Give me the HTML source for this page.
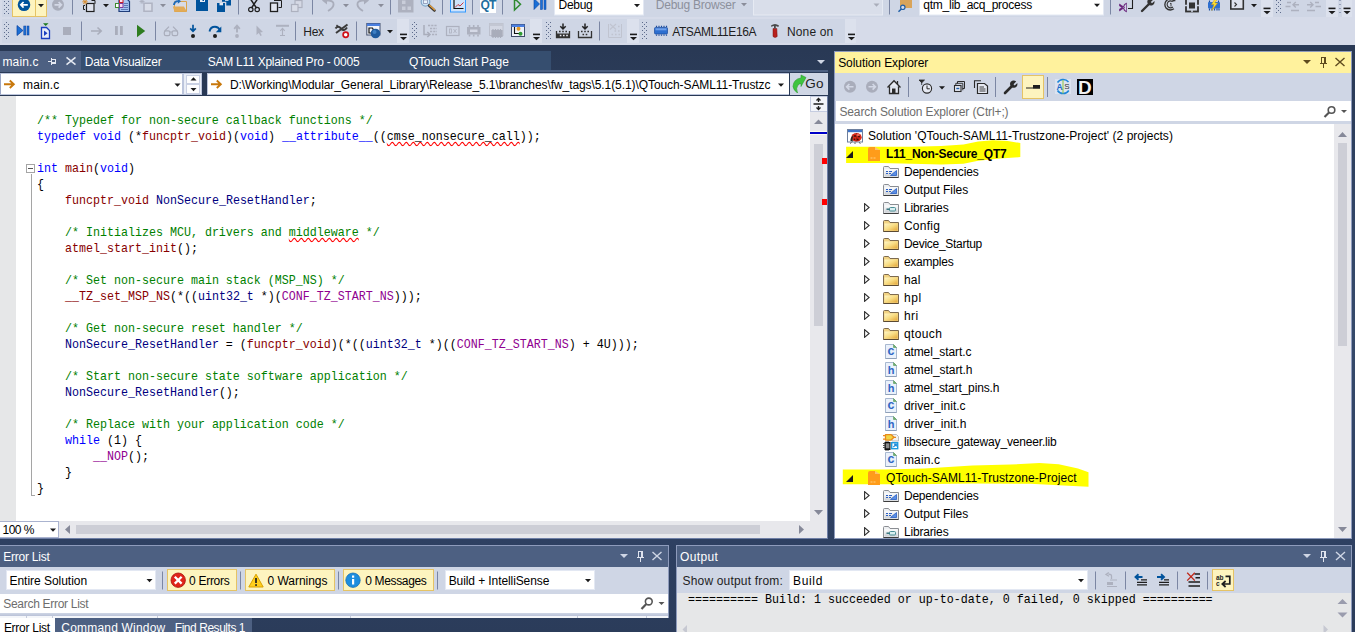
<!DOCTYPE html>
<html>
<head>
<meta charset="utf-8">
<title>Atmel Studio</title>
<style>
*{box-sizing:border-box;margin:0;padding:0}
html,body{width:1355px;height:632px;overflow:hidden;background:#293955}
body{background:linear-gradient(to bottom,#293955 0,#293955 50px,#314465 205px,#35496a 325px,#2e4062 540px,#2b3c5a 632px)}
body{font-family:"Liberation Sans",sans-serif;font-size:12px;color:#000;position:relative}
.abs{position:absolute}
.t{position:absolute;white-space:pre;line-height:16px;font-size:12px}
svg{position:absolute;overflow:visible}
/* ---------- top toolbars ---------- */
#shelf{left:0;top:0;width:1355px;height:45px;background:#d6dbe9}
.tb{background:#cfd6e5}
.grip{position:absolute;width:5px;background-image:radial-gradient(circle at 0.5px 0.5px,#6a7590 0.6px,transparent 0.7px),radial-gradient(circle at 0.5px 0.5px,#6a7590 0.6px,transparent 0.7px);background-size:4px 4px,4px 4px;background-position:0 0,2px 2px}
.sep{position:absolute;width:1px;background:#8591ad}
.combo{position:absolute;background:#fff;border:1px solid #e5ebf5}
.arr{position:absolute;width:0;height:0;border-left:3.5px solid transparent;border-right:3.5px solid transparent;border-top:4px solid #1b1b1c}
/* ---------- tabs ---------- */
.tab{position:absolute;top:53px;height:19px;color:#fff;font-size:12px;line-height:19px;white-space:pre}
/* ---------- code ---------- */
#code{left:0;top:96px;width:810px;height:425px;background:#fff;overflow:hidden}
.ln{position:absolute;left:37px;height:16px;line-height:16px;font-family:"Liberation Mono",monospace;font-size:11.67px;white-space:pre;color:#000;transform:scaleY(1.1);transform-origin:0 12px;margin-top:2px}
.c{color:#008000}.k{color:#0000ff}.f{color:#880000}.v{color:#000080}.m{color:#900090}
.sq{text-decoration:underline wavy #ff0000 0.7px;text-decoration-skip-ink:none;text-underline-offset:0.6px}
/* ---------- solution explorer ---------- */
.row{position:absolute;left:0;height:18px;line-height:20px;font-size:12px;white-space:pre}
</style>
</head>
<body>

<svg width="0" height="0" style="position:absolute">
<defs>
<linearGradient id="gFold" x1="0" y1="0" x2="1" y2="1"><stop offset="0" stop-color="#fff7c8"/><stop offset="0.5" stop-color="#f8dc82"/><stop offset="1" stop-color="#e2a63a"/></linearGradient>
<linearGradient id="gGray" x1="0" y1="0" x2="0" y2="1"><stop offset="0" stop-color="#ffffff"/><stop offset="1" stop-color="#c9cdd2"/></linearGradient>
<symbol id="iFolder" viewBox="0 0 16 12"><path d="M0.5 11.5V1.5Q0.5 0.5 1.5 0.5H5.5L7 2.5H15.5V11.5Z" fill="#f2d383" stroke="#7d6a4f"/><rect x="1.5" y="3.5" width="13" height="7" fill="url(#gFold)"/><path d="M0.5 11.5H15.5" stroke="#5b4a33"/></symbol>
<symbol id="iGFolder" viewBox="0 0 16 12"><path d="M0.5 11.5V1.5Q0.5 0.5 1.5 0.5H5.5L7 2.5H15.5V11.5Z" fill="#eef0f2" stroke="#8a8d92"/><rect x="1.5" y="3.5" width="13" height="7" fill="url(#gGray)"/><path d="M0.5 11.5H15.5" stroke="#3c3c3c"/></symbol>
<symbol id="iDep" viewBox="0 0 16 12"><path d="M0.5 11.5V1.5Q0.5 0.5 1.5 0.5H5.5L7 2.5H15.5V11.5Z" fill="#eef0f2" stroke="#8a8d92"/><rect x="1.5" y="3.5" width="13" height="7" fill="url(#gGray)"/><path d="M0.5 11.5H15.5" stroke="#3c3c3c"/><path d="M3 5.5h2M6 5.5h3M3 7.5h2M6 7.5h2" stroke="#2a5fc4" stroke-width="1"/><path d="M13.5 4.5V9.5H7.5Z" fill="#5b8fe6" stroke="#2a5fc4" stroke-width="0.8"/></symbol>
<symbol id="iLib" viewBox="0 0 16 12"><path d="M0.5 11.5V1.5Q0.5 0.5 1.5 0.5H5.5L7 2.5H15.5V11.5Z" fill="#eef0f2" stroke="#8a8d92"/><rect x="1.5" y="3.5" width="13" height="7" fill="url(#gGray)"/><path d="M0.5 11.5H15.5" stroke="#3c3c3c"/><rect x="6.5" y="5.5" width="6" height="3.5" rx="1" fill="#d8eef0" stroke="#4a8f96"/><path d="M3.5 7.2h3" stroke="#2e6f78" stroke-width="1.4"/></symbol>
<symbol id="iFileC" viewBox="0 0 12 15"><path d="M0.5 0.5H8.5L11.5 3.5V14.5H0.5Z" fill="#eaf1fb" stroke="#a8b8d0"/><path d="M8.5 0.5V3.5H11.5Z" fill="#6fae6f" stroke="#5c9c5c" stroke-width="0.6"/><path d="M0.5 14.5H11.5" stroke="#8fa0b8"/></symbol>
<symbol id="iProj" viewBox="0 0 12 14"><path d="M0 2Q0 0 2 0H7V3H12V14H0Z" fill="#ff9c1a"/><path d="M7 0L12 3H7Z" fill="#ffc36b"/><path d="M2.5 11h2M5.5 11h2" stroke="#ffbf5f" stroke-width="1.3"/></symbol>
<symbol id="iExp" viewBox="0 0 6 9"><path d="M0.6 0.7L5.1 4.5L0.6 8.3Z" fill="#fff" stroke="#2d2d2d" stroke-width="1.1"/></symbol>
<symbol id="iCol" viewBox="0 0 7 7"><path d="M7 0V7H0Z" fill="#1b1b1b"/></symbol>
</defs>
</svg>

<!-- ================= TOP TOOLBARS ================= -->
<div id="shelf" class="abs"></div>
<div id="tb1" class="abs tb" style="left:2px;top:0;width:1265px;height:17px"></div>
<div id="tb2" class="abs tb" style="left:2px;top:19px;width:853px;height:24px"></div>

<!-- toolbar icons -->
<svg id="tbsvg" style="left:0;top:0" width="1355" height="45" viewBox="0 0 1355 45">
<defs>
<pattern id="grip" width="4" height="4" patternUnits="userSpaceOnUse"><rect x="0" y="0" width="1" height="1" fill="#5d6b8c"/><rect x="2" y="2" width="1" height="1" fill="#5d6b8c"/></pattern>
<g id="ovf"><rect x="0" y="0" width="7" height="1.6" fill="#1b1b1c"/><path d="M0 3.4H7L3.5 6.6Z" fill="#1b1b1c"/></g>
<g id="dd"><path d="M0 0H6L3 3.2Z"/></g>
</defs>
<!-- ===== ROW 1 ===== -->
<rect x="1261" y="0" width="91" height="17" fill="#dce1ed"/>
<rect x="1273" y="0" width="53" height="17" fill="#cfd6e5"/>
<rect x="1338" y="0" width="4" height="17" fill="#cfd6e5"/>
<rect x="4" y="0" width="6" height="14" fill="url(#grip)" transform="translate(0,1)"/>
<!-- back button -->
<rect x="12.5" y="-1" width="34" height="17.5" fill="#fdf4bf" stroke="#e5c365"/>
<path d="M35.5 0V16" stroke="#e5c365"/>
<circle cx="24" cy="4.8" r="6.3" fill="#00539c"/>
<path d="M27.8 4.8H21M23.6 2L20.8 4.8L23.6 7.6" stroke="#fff" stroke-width="1.7" fill="none"/>
<use href="#dd" x="38" y="4" fill="#1b1b1c"/>
<circle cx="58" cy="4.8" r="6" fill="#a9adbb"/>
<path d="M54.5 4.8H61M58.6 2L61.4 4.8L58.6 7.6" stroke="#d3d8e6" stroke-width="1.7" fill="none"/>
<path d="M72.5 0V14.5" stroke="#7b86a3"/>
<!-- new project -->
<rect x="86.5" y="3.5" width="7.5" height="8" fill="#dfe3ee" stroke="#1e1e1e" stroke-width="1.2"/>
<path d="M85 5.5H83.5V9.5H85" fill="none" stroke="#1e1e1e"/>
<path d="M91.5 0.5H95V3.8" fill="none" stroke="#1e1e1e"/>
<path d="M85 -1V4.5M82.3 1.8H87.7M83 -0.2L87 3.8M87 -0.2L83 3.8" stroke="#d88a2a" stroke-width="0.9"/>
<use href="#dd" x="103" y="4" fill="#1b1b1c"/>
<!-- new file w/ squares -->
<path d="M119 -1H127L129.5 1.5V11.5H119Z" fill="#a8c4f0" stroke="#1f3d7a" stroke-width="1.2"/>
<path d="M124 3.5H128M124 5.5H128M124 7.5H128M121 9.5H128" stroke="#4a68a8" stroke-width="0.8"/>
<rect x="119.5" y="-1.5" width="3.5" height="4" fill="#ffe3ee" stroke="#c8242b"/>
<rect x="115.5" y="3.5" width="3.5" height="4" fill="#fff" stroke="#3c8a2e"/>
<rect x="119.5" y="3.5" width="3.5" height="4" fill="#fde" stroke="#7a3a9a"/>
<!-- gray new item -->
<path d="M144 3.2H152V11.2H144Z" fill="#d9dde8" stroke="#b0b4c3" stroke-width="1.6"/>
<path d="M142 -1V4M139.5 1.5H144.5M140.3 -0.3L143.7 3.3M143.7 -0.3L140.3 3.3" stroke="#adb1bf" stroke-width="0.9"/>
<use href="#dd" x="160" y="4" fill="#8a8d9a"/>
<!-- open folder -->
<path d="M174.5 1.5H186.5V11.5H174.5Z" fill="#d8dbe6" stroke="#dba44c"/>
<path d="M172.8 6.5H184L186.8 11.5H174.5Z" fill="#e3ab57"/>
<path d="M173 5Q173.5 0.5 178 0.3L177.5 -1.5L181 1.2L177.8 3.8L177.9 2Q175.3 2.2 174.8 5Z" fill="#1d6ab8"/>
<!-- save -->
<path d="M196 -1H208V11H196Z" fill="#00539c"/>
<rect x="200" y="-1" width="5" height="3" fill="#e6ebf5"/><rect x="202.5" y="-1" width="1.5" height="2" fill="#00539c"/>
<!-- save all -->
<path d="M217 3H225V12H217Z" fill="#00539c"/><rect x="219.5" y="3" width="3.5" height="2.3" fill="#e6ebf5"/>
<path d="M222 -1H231V5.5H226.3V1.8H222Z" fill="#00539c"/><rect x="225" y="-1" width="3.5" height="1.8" fill="#e6ebf5"/>
<path d="M238.5 0V14.5" stroke="#7b86a3"/>
<!-- scissors -->
<path d="M250.5 -1L256.5 8M257.5 -1L251.5 8" stroke="#1e1e1e" stroke-width="1.5" fill="none"/>
<circle cx="250.8" cy="9.5" r="2.2" fill="none" stroke="#1e1e1e" stroke-width="1.2"/><circle cx="257.2" cy="9.5" r="2.2" fill="none" stroke="#1e1e1e" stroke-width="1.2"/>
<!-- copy -->
<path d="M274 0.5H281.5V7.5H278.5" fill="none" stroke="#1e1e1e"/>
<rect x="270.5" y="3" width="7" height="8.5" fill="#e1e4ee" stroke="#1e1e1e" stroke-width="1.3"/>
<!-- paste gray -->
<rect x="295" y="0.5" width="7" height="7" fill="#d5d9e5" stroke="#adb1bf" stroke-width="1.2"/>
<rect x="291.5" y="4.5" width="6.5" height="7" fill="#d9dde8" stroke="#adb1bf" stroke-width="1.2"/>
<path d="M312.5 0V14.5" stroke="#7b86a3"/>
<!-- undo gray -->
<path d="M324 0.5H329Q334 1 333.5 5Q333 8 328 11" fill="none" stroke="#a9adbb" stroke-width="1.8"/>
<path d="M322 0.5L327 -3.5V4.5Z" fill="#a9adbb"/>
<use href="#dd" x="343" y="4" fill="#8a8d9a"/>
<!-- redo gray -->
<path d="M367 0.5H362Q357 1 357.5 5Q358 8 363 11" fill="none" stroke="#a9adbb" stroke-width="1.8"/>
<path d="M369 0.5L364 -3.5V4.5Z" fill="#a9adbb"/>
<use href="#dd" x="378" y="4" fill="#8a8d9a"/>
<path d="M390.5 0V14.5" stroke="#7b86a3"/>
<!-- gray grid -->
<rect x="398" y="-1" width="15.5" height="13.5" fill="#adb1bf"/>
<rect x="402" y="0.5" width="3.5" height="3.5" fill="#c9cdd9"/><rect x="402" y="6.5" width="3.5" height="3.5" fill="#c9cdd9"/><rect x="407.5" y="6.5" width="3.5" height="3.5" fill="#c9cdd9"/>
<!-- magnifier -->
<circle cx="425.5" cy="1.8" r="4.3" fill="#cfe6f7" stroke="#7fa6c8" stroke-width="1.2"/>
<rect x="423.5" y="0" width="4" height="3.5" fill="#e9f3fb" stroke="#8a93b5" stroke-width="0.8"/>
<path d="M429 5.5L434.5 10.5" stroke="#3d3a36" stroke-width="2.6" stroke-linecap="round"/>
<path d="M429.5 5.3L434.5 9.8" stroke="#e9a03a" stroke-width="1.2" stroke-linecap="round"/>
<path d="M442.5 0V14.5" stroke="#7b86a3"/>
<!-- chart (checked) -->
<rect x="450.5" y="-1" width="15" height="13" fill="#cfe3fb" stroke="#3399ff"/>
<path d="M454 -1V8.5H463.5" fill="none" stroke="#111" stroke-width="1.2"/>
<path d="M455 7.5L458 4.5L460 6L463.5 2.5" fill="none" stroke="#c8242b" stroke-width="0.9"/>
<path d="M472.5 0V14.5" stroke="#7b86a3"/>
<!-- QT -->
<rect x="480" y="-1" width="16" height="14" fill="#fff"/>
<path d="M502.5 0V14.5" stroke="#7b86a3"/>
<!-- green play outline -->
<path d="M514.5 -1.5L520.5 4.3L514.5 10Z" fill="none" stroke="#2f8a2f" stroke-width="1.5"/>
<!-- blue play-pause -->
<path d="M534 -1.5L539.5 4L534 9.5Z" fill="#1a6fd6" stroke="#0a3f9c" stroke-width="0.6"/>
<rect x="540.5" y="-1" width="2" height="10.5" fill="#1a6fd6" stroke="#0a3f9c" stroke-width="0.5"/><rect x="544" y="-1" width="2" height="10.5" fill="#1a6fd6" stroke="#0a3f9c" stroke-width="0.5"/>
<!-- Debug combo -->
<rect x="554.5" y="-1" width="89" height="16" fill="#fff" stroke="#e3e8f3"/>
<use href="#dd" x="634" y="4" fill="#1b1b1c"/>
<use href="#dd" x="741" y="3" fill="#8a8d9a"/>
<rect x="753.5" y="-1" width="129" height="16" fill="#d9deea" stroke="#e6eaf3"/>
<use href="#dd" x="873.5" y="3.5" fill="#a9adba"/>
<path d="M889.5 0V14.5" stroke="#7b86a3"/>
<!-- find in files -->
<rect x="900" y="-1" width="12" height="9" fill="#d9a45a"/>
<circle cx="902.8" cy="7.3" r="2.2" fill="#d6dbe9" stroke="#1f5fa8" stroke-width="1.2"/>
<path d="M901.3 9L898.5 11.8" stroke="#1f5fa8" stroke-width="1.5"/>
<rect x="919.5" y="-1" width="184" height="16" fill="#fff" stroke="#e3e8f3"/>
<use href="#dd" x="1094" y="3.8" fill="#1b1b1c"/>
<path d="M1110.5 0V14.5" stroke="#7b86a3"/>
<!-- VS icon -->
<path d="M1121.5 -1H1132.5V8.5H1128" fill="none" stroke="#1e1e1e" stroke-width="1.1"/>
<path d="M1119.5 4L1124.5 7.5L1119.5 11V9L1122 7.5L1119.5 6Z M1126.5 3V12L1124 10.3V4.7Z M1126.3 3.3L1122.5 7.5L1126.3 11.7" fill="#68217a" stroke="#68217a" stroke-width="0.6"/>
<!-- wrench -->
<path d="M1142 11L1149 4" stroke="#333" stroke-width="2.4" stroke-linecap="round"/>
<path d="M1148 -0.5Q1151 -2.5 1153.5 -0.5L1150.8 2L1152 3.3L1154.5 1Q1155 4 1152.5 5.2Q1150 6 1148.2 4.5Q1146.5 2 1148 -0.5Z" fill="#333"/>
<!-- circular -->
<path d="M1174 0Q1170 -2.5 1166.5 0.5Q1163.5 4 1166 8Q1169.5 11.5 1174 8.8" fill="none" stroke="#333" stroke-width="1.3"/>
<path d="M1172.5 1.5Q1170 0 1168 2Q1166.3 4.5 1168 6.8Q1170.5 8.8 1173 7" fill="none" stroke="#333" stroke-width="1.1"/>
<path d="M1171 3V6.5M1170 3.8L1171 3" stroke="#333" stroke-width="0.9" fill="none"/>
<path d="M1172.8 -1.5L1176 1L1172 1.8Z" fill="#333"/>
<!-- square icon -->
<rect x="1186" y="-1" width="12" height="12.5" fill="none" stroke="#333" stroke-width="1.8"/>
<rect x="1189" y="2.5" width="6" height="6" fill="#333"/>
<path d="M1192 -1V1.5M1192 9.5V12M1185 5.5H1187.5M1196.5 5.5H1199" stroke="#cfd6e5" stroke-width="1.5"/>
<!-- chip w lightning -->
<rect x="1208" y="2" width="12" height="6.5" rx="1" fill="#2d6fd0"/>
<path d="M1209.5 8.5v2M1212 8.5v2M1214.5 8.5v2M1217 8.5v2M1219 8.5v2M1209.5 2V0.5M1218.5 2V0.5" stroke="#1d4fa0" stroke-width="1.2"/>
<path d="M1215.5 -2L1211.5 4.5H1214L1211.8 10.5L1217.5 3H1214.8L1218 -2Z" fill="#ffe033" stroke="#c79a10" stroke-width="0.5"/>
<!-- window icon -->
<rect x="1230.8" y="-1" width="12.5" height="10" fill="#dfe2ec" stroke="#333" stroke-width="1.6"/>
<path d="M1234.5 2.5L1236.5 4.5L1234.5 6.5" fill="none" stroke="#333" stroke-width="1.1"/>
<use href="#dd" x="1251" y="4" fill="#1b1b1c"/>
<use href="#ovf" x="1263.5" y="7.6"/>
<rect x="1275" y="-2" width="6" height="16" fill="url(#grip)"/>
<!-- outdent / indent gray -->
<path d="M1287 2.5H1291M1285.5 6.5H1290.5M1291 10.5H1299" stroke="#adb1bf" stroke-width="1.4"/>
<path d="M1299 4.7H1293M1295.8 2L1293 4.7L1295.8 7.4" stroke="#adb1bf" stroke-width="1.4" fill="none"/>
<path d="M1315 2.5H1319M1315.5 6.5H1321M1307 10.5H1315" stroke="#adb1bf" stroke-width="1.4"/>
<path d="M1307 4.7H1313M1310.2 2L1313 4.7L1310.2 7.4" stroke="#adb1bf" stroke-width="1.4" fill="none"/>
<use href="#ovf" x="1328.5" y="7.6"/>
<rect x="1339.5" y="0" width="1" height="1" fill="#5d6b8c"/><rect x="1339.5" y="4" width="1" height="1" fill="#5d6b8c"/><rect x="1339.5" y="8" width="1" height="1" fill="#5d6b8c"/><rect x="1339.5" y="12" width="1" height="1" fill="#5d6b8c"/>
<use href="#ovf" x="1343.5" y="7.6"/>

<!-- ===== ROW 2 ===== -->
<rect x="397" y="19" width="12" height="24" fill="#dce1ed"/>
<rect x="530" y="19" width="12" height="24" fill="#dce1ed"/>
<rect x="627" y="19" width="12" height="24" fill="#dce1ed"/>
<rect x="845" y="19" width="11" height="24" fill="#dce1ed"/>
<rect x="4" y="22" width="6" height="18" fill="url(#grip)"/>
<!-- start debugging -->
<path d="M17 25.5L23 30.5L17 35.5Z" fill="#1a6fd6" stroke="#0a3f9c" stroke-width="0.7"/>
<rect x="23.8" y="26" width="2" height="9" fill="#1a6fd6" stroke="#0a3f9c" stroke-width="0.5"/><rect x="27" y="26" width="2" height="9" fill="#1a6fd6" stroke="#0a3f9c" stroke-width="0.5"/>
<!-- doc with play -->
<path d="M41.5 27.5H46.5L49.5 30.5V38.5H41.5Z" fill="#e8ecf8" stroke="#1c3fc0" stroke-width="1.3"/>
<path d="M44 30.5L47.5 33.3L44 36Z" fill="#1c3fc0"/>
<path d="M43 23.2H48.5L45.7 26Z" fill="#1e7a1e"/>
<!-- stop gray -->
<rect x="63" y="27" width="8" height="8" fill="#a9adbb"/>
<path d="M81.5 21.5V40.5" stroke="#7b86a3"/>
<!-- gray arrow -->
<path d="M91 31H101M97.5 27.5L101.2 31L97.5 34.5" stroke="#a9adbb" stroke-width="1.6" fill="none"/>
<!-- pause gray -->
<rect x="115" y="26" width="2.8" height="9" fill="#a9adbb"/><rect x="120" y="26" width="2.8" height="9" fill="#a9adbb"/>
<!-- play green -->
<path d="M137 24.8L145.2 31L137 37.2Z" fill="#2e7d20"/>
<path d="M155.5 21.5V40.5" stroke="#7b86a3"/>
<!-- glasses gray -->
<rect x="164.3" y="30.8" width="5.6" height="4.8" rx="1.6" fill="none" stroke="#a9adbb" stroke-width="1.2"/><rect x="172.1" y="30.8" width="5.6" height="4.8" rx="1.6" fill="none" stroke="#a9adbb" stroke-width="1.2"/>
<path d="M164.6 31.2L169 26.6M177.4 31.2L173 26.6M169.9 32H172.1" stroke="#a9adbb" stroke-width="1.2" fill="none"/>
<!-- step into -->
<path d="M193 24.8V31M190.2 28.3L193 31.3L195.8 28.3" stroke="#00539c" stroke-width="1.7" fill="none"/>
<circle cx="193" cy="36" r="2" fill="#1e1e1e"/>
<!-- step over -->
<path d="M209.5 31.5Q210.5 26.8 215 26.8Q218.5 26.8 219.8 30" stroke="#00539c" stroke-width="1.9" fill="none"/>
<path d="M221.3 26.5V32.3H215.8Z" fill="#00539c"/>
<circle cx="215" cy="36" r="2" fill="#1e1e1e"/>
<!-- step out gray -->
<path d="M237 32.5V26M234.2 28.8L237 25.6L239.8 28.8" stroke="#adb1bf" stroke-width="1.9" fill="none"/>
<circle cx="237" cy="36" r="1.9" fill="#adb1bf"/>
<!-- cursor gray -->
<path d="M256.5 25.5V35L258.8 33L260.5 36L261.8 35.3L260.2 32.5L263 32Z" fill="#adb1bf"/>
<!-- gray up-to-line -->
<path d="M276 25.8H289" stroke="#adb1bf" stroke-width="2"/>
<path d="M282.5 35V28.5M280.3 30.8L282.5 28.3L284.7 30.8M280 35.5H285" stroke="#adb1bf" stroke-width="1.1" fill="none"/>
<path d="M295.5 21.5V40.5" stroke="#7b86a3"/>
<!-- breakpoint icon -->
<path d="M335.5 28.5Q338 25 341 28.5T347 27.5" stroke="#3a3a3a" stroke-width="2" fill="none"/>
<path d="M336 33L347.5 24.5" stroke="#3a3a3a" stroke-width="2"/>
<path d="M336.5 25L338.5 27" stroke="#3a3a3a" stroke-width="1.4"/>
<circle cx="345.7" cy="34.8" r="2.6" fill="#fff" stroke="#d0101a" stroke-width="1.7"/>
<path d="M356.5 21.5V40.5" stroke="#7b86a3"/>
<!-- window w/ blue ball -->
<rect x="366.8" y="23.5" width="13.2" height="11.5" fill="#f2f5fb" stroke="#44506e"/>
<rect x="367" y="23.5" width="13" height="2.5" fill="#4a7fe0"/>
<path d="M369 28V33H372.5Q374.5 30.5 372.5 28Z" fill="none" stroke="#111" stroke-width="1.2"/>
<circle cx="375.5" cy="33.5" r="4.8" fill="#1f5a9e"/><circle cx="374.5" cy="32" r="2" fill="#3d7fc4"/>
<use href="#dd" x="387" y="30" fill="#1b1b1c"/>
<use href="#ovf" x="400" y="33.6"/>
<rect x="411" y="22" width="6" height="18" fill="url(#grip)"/>
<!-- gray: list w arrow -->
<path d="M428 25.5H437M430 28.5H437M430 31.5H437M432 34.5H437" stroke="#adb1bf" stroke-width="1.3" stroke-dasharray="2.2 1"/>
<path d="M424 25V34.5H429.5M427.3 32L430 34.5L427.3 37" stroke="#a9adbb" stroke-width="1.5" fill="none"/>
<!-- gray 0x box -->
<rect x="446.5" y="26.5" width="12.5" height="9" fill="none" stroke="#adb1bf" stroke-width="1.2"/>
<rect x="449.5" y="29" width="2" height="4" fill="none" stroke="#adb1bf" stroke-width="0.8"/><path d="M453.5 29L456.5 33M456.5 29L453.5 33" stroke="#adb1bf" stroke-width="0.8"/>
<!-- gray chip -->
<rect x="467" y="27" width="13.5" height="7.5" fill="#adb1bf"/><rect x="470" y="29.5" width="7.5" height="2.5" fill="#d5d9e6"/>
<path d="M469.5 25V27M473.7 25V27M478 25V27M469.5 34.5V36.5M473.7 34.5V36.5M478 34.5V36.5" stroke="#adb1bf" stroke-width="1.6"/>
<!-- gray window w chips -->
<rect x="489.5" y="23.5" width="13.5" height="12" fill="#d3d7e3" stroke="#bcc0cd"/>
<rect x="489.5" y="23.5" width="13.5" height="2.5" fill="#c3c7d3"/>
<path d="M492 30.5H502V36.5H492Z M493 29V38M495.5 29V38M498 29V38M500.5 29V38" fill="#a9adbb" stroke="#a9adbb" stroke-width="1.2"/>
<!-- color window w dots -->
<rect x="511.5" y="24.5" width="13" height="12" fill="#eef1f8" stroke="#3e4a6a"/>
<rect x="511.5" y="24.5" width="13" height="2.5" fill="#4a7fe0"/>
<path d="M514.5 27V33.5H519" fill="none" stroke="#111" stroke-width="1.1"/>
<circle cx="518.5" cy="28.8" r="2" fill="#e59a23"/><circle cx="520.5" cy="33.8" r="2" fill="#2e9a34"/>
<use href="#ovf" x="533" y="33.6"/>
<rect x="545" y="22" width="6" height="18" fill="url(#grip)"/>
<!-- icon A -->
<path d="M563 23.5V28.5M560.3 26.3L563 29L565.7 26.3" stroke="#222" stroke-width="1.5" fill="none"/>
<path d="M556.5 31V37.5H569.5V31" fill="none" stroke="#333" stroke-width="1.3"/>
<rect x="557" y="33.5" width="12" height="4" fill="#333"/>
<path d="M559 31.5h1.6M562.2 31.5h1.6M565.4 31.5h1.6" stroke="#333" stroke-width="1.5"/>
<path d="M559.8 35.5h1.6M563 35.5h1.6M566.2 35.5h1.6" stroke="#e9ecf4" stroke-width="1.3"/>
<!-- icon B -->
<path d="M585 23.5V28.5M582.3 26.3L585 29L587.7 26.3" stroke="#222" stroke-width="1.5" fill="none"/>
<path d="M578.5 31V37.5H591.5V31" fill="none" stroke="#333" stroke-width="1.3"/>
<path d="M581 31.5h1.6M584.2 31.5h1.6M587.4 31.5h1.6M582.5 34.5h1.6M585.7 34.5h1.6" stroke="#333" stroke-width="1.5"/>
<path d="M599.5 21.5V40.5" stroke="#7b86a3"/>
<!-- gray icon C -->
<path d="M608.5 24V37.5H621.5V24" fill="none" stroke="#c0c4d0" stroke-width="1"/>
<path d="M610 24L616 29.5M616 24L610 29.5" stroke="#c0c4d0" stroke-width="1.1"/>
<path d="M618 26.5h1.6M614.5 31h1.6M618 31h1.6M611.5 34.5h1.6M615 34.5h1.6M618.5 34.5h1.6" stroke="#c0c4d0" stroke-width="1.4"/>
<use href="#ovf" x="630" y="33.6"/>
<rect x="641" y="22" width="6" height="18" fill="url(#grip)"/>
<!-- chip blue -->
<rect x="654.5" y="27.5" width="13" height="6.5" rx="1" fill="#2d6fd0" stroke="#1b4a9c" stroke-width="0.7"/>
<rect x="655.5" y="28.3" width="11" height="2" fill="#6fa0ea"/>
<path d="M656.5 27V25.8M659 27V25.8M661.5 27V25.8M664 27V25.8M666.5 27V25.8M656.5 34.5V35.8M659 34.5V35.8M661.5 34.5V35.8M664 34.5V35.8M666.5 34.5V35.8" stroke="#1b4a9c" stroke-width="1.2"/>
<!-- hammer -->
<path d="M773 28.5L776.8 28.5L777.2 36.5Q775 38.5 773 36.5Z" fill="#b8201c" stroke="#7a100e" stroke-width="0.5"/>
<path d="M771 25.5Q775 22.5 779 25.5L778.3 27L775.8 26V28.5H774V26Q772.5 26 771.5 27Z" fill="#4a4a4a"/>
<use href="#ovf" x="848" y="33.6"/>
</svg>

<!-- toolbar text -->
<div class="t" id="tHex" style="left:303.3px;top:24px;color:#1e1e1e;letter-spacing:-0.32px">Hex</div>
<div class="t" id="tDebug" style="left:558.5px;top:-3px;letter-spacing:-0.27px">Debug</div>
<div class="t" id="tDbgBr" style="left:655.8px;top:-3px;color:#8c909c;letter-spacing:-0.24px">Debug Browser</div>
<div class="t" id="tQtm" style="left:923.3px;top:-3px;letter-spacing:-0.25px">qtm_lib_acq_process</div>
<div class="t" id="tAts" style="left:672.3px;top:24px;color:#1e1e1e;letter-spacing:-0.44px">ATSAML11E16A</div>
<div class="t" id="tNone" style="left:786.9px;top:24px;color:#1e1e1e;letter-spacing:0.16px">None on</div>
<div class="t" id="tQT" style="left:480.5px;top:-3px;font-weight:bold;font-size:12px;color:#1e6e9e;letter-spacing:-0.8px">QT</div>
<!-- ================= DOC TABS ================= -->
<div class="abs" style="left:0;top:51px;width:81px;height:21px;background:#4d6082"></div>
<div class="abs" style="left:81px;top:51px;width:470px;height:19px;background:#364e6f"></div>
<div class="abs" style="left:0;top:70px;width:828px;height:2px;background:#4d6082"></div>
<div class="tab" style="left:2.5px;letter-spacing:0.11px">main.c</div>
<div class="tab" style="left:84.8px;letter-spacing:-0.25px">Data Visualizer</div>
<div class="tab" style="left:207.7px;letter-spacing:-0.23px">SAM L11 Xplained Pro - 0005</div>
<div class="tab" style="left:408.9px;letter-spacing:-0.09px">QTouch Start Page</div>

<svg style="left:0;top:51px" width="828" height="21" viewBox="0 51 828 21">
<path d="M48 61h3v1h-3zM51 58h1v7h-1zM52 59h4v1h-4zM55 59h1v5h-1zM52 62h4v2h-4z" fill="#e4e8f1"/>
<path d="M66.5 57.3L75.5 64.7M75.5 57.3L66.5 64.7" stroke="#e4e8f1" stroke-width="1.5"/>
<path d="M817 60H825L821 64Z" fill="#cfd6e5"/>
</svg>
<!-- ================= NAV BAR ================= -->
<div class="abs" style="left:0;top:73px;width:828px;height:23px;background:#cfd6e5"></div>
<div class="abs" style="left:202px;top:73px;width:5px;height:23px;background:#293955"></div>
<div class="abs" style="left:0;top:73px;width:183px;height:22px;background:#fff;border:1px solid #bcc5dc;border-left:1px solid #9aa6c4"></div>
<div class="abs" style="left:183px;top:73px;width:19px;height:22px;background:#e9edf6;border:1px solid #bcc5dc"></div>
<div class="abs" style="left:186px;top:75px;width:14px;height:9px;background:#fdfdfe;border:1px solid #c9d0e3"></div>
<div class="abs" style="left:186px;top:84px;width:14px;height:10px;background:#fdfdfe;border:1px solid #c9d0e3"></div>
<div class="abs" style="left:207px;top:73px;width:583px;height:22px;background:#fff;border:1px solid #bcc5dc"></div>
<div class="abs" style="left:0;top:95px;width:828px;height:1px;background:#293955"></div>
<div class="abs" style="left:789px;top:73px;width:1px;height:22px;background:#293955"></div>
<svg style="left:0;top:73px" width="828" height="23" viewBox="0 73 828 23">
<path d="M4 84.2H13M9.8 80.5L13.8 84.2L9.8 88" stroke="#c8780c" stroke-width="1.9" fill="none"/>
<path d="M211 84.2H220M216.8 80.5L220.8 84.2L216.8 88" stroke="#c8780c" stroke-width="1.9" fill="none"/>
<path d="M174.5 83.5H180.5L177.5 86.8Z" fill="#1b1b1c"/>
<path d="M190.5 80.5H196.5L193.5 77.3Z" fill="#1b1b1c"/>
<path d="M190.5 88H196.5L193.5 91.2Z" fill="#1b1b1c"/>
<path d="M778 83.5H784L781 86.8Z" fill="#1b1b1c"/>
<path d="M806 77.5L801 75V78Q793.5 79 793 86.5Q793.5 90 797.5 93Q795.5 88 798 85Q799.5 83.5 801 83.5V86.5Z" fill="#3fc43f" stroke="#2a9a2a" stroke-width="0.6"/>
</svg>
<div class="t" id="tNav1" style="left:23px;top:77px;letter-spacing:0.19px">main.c</div>
<div class="t" id="tNav2" style="left:229.9px;top:77px;letter-spacing:-0.08px">D:\Working\Modular_General_Library\Release_5.1\branches\fw_tags\5.1(5.1)\QTouch-SAML11-Trustzc</div>
<div class="t" id="tGo" style="left:805.2px;top:75.5px;font-size:13.5px;color:#1e1e1e;letter-spacing:0.4px">Go</div>

<!-- ================= CODE ================= -->
<div id="code" class="abs">
<div class="abs" style="left:0;top:0;width:16px;height:425px;background:#e6e7e8"></div>
<!-- outlining -->
<div class="abs" style="left:26px;top:68px;width:9px;height:9px;border:1px solid #a5a5a5;background:#fff"></div>
<div class="abs" style="left:28px;top:72px;width:5px;height:1px;background:#555"></div>
<div class="abs" style="left:31px;top:78px;width:1px;height:322px;background:#a5a5a5"></div>
<div class="abs" style="left:31px;top:399px;width:4px;height:1px;background:#a5a5a5"></div>
<div class="ln" style="top:15px"><span class="c">/** Typedef for non-secure callback functions */</span></div>
<div class="ln" style="top:31px"><span class="k">typedef void</span> (*<span class="f">funcptr_void</span>)(<span class="k">void</span>) <span class="k">__attribute__</span>((<span class="sq">cmse_nonsecure_call</span>));</div>
<div class="ln" style="top:63px"><span class="k">int</span> <span class="f">main</span>(<span class="k">void</span>)</div>
<div class="ln" style="top:79px">{</div>
<div class="ln" style="top:95px">    <span class="f">funcptr_void</span> <span class="v">NonSecure_ResetHandler</span>;</div>
<div class="ln" style="top:127px">    <span class="c">/* Initializes MCU, drivers and <span class="sq">middleware</span> */</span></div>
<div class="ln" style="top:143px">    <span class="f">atmel_start_init</span>();</div>
<div class="ln" style="top:175px">    <span class="c">/* Set non-secure main stack (MSP_NS) */</span></div>
<div class="ln" style="top:191px">    <span class="f">__TZ_set_MSP_NS</span>(*((<span class="v">uint32_t</span> *)(<span class="m">CONF_TZ_START_NS</span>)));</div>
<div class="ln" style="top:223px">    <span class="c">/* Get non-secure reset handler */</span></div>
<div class="ln" style="top:239px">    <span class="v">NonSecure_ResetHandler</span> = (<span class="f">funcptr_void</span>)(*((<span class="v">uint32_t</span> *)((<span class="m">CONF_TZ_START_NS</span>) + 4U)));</div>
<div class="ln" style="top:271px">    <span class="c">/* Start non-secure state software application */</span></div>
<div class="ln" style="top:287px">    <span class="v">NonSecure_ResetHandler</span>();</div>
<div class="ln" style="top:319px">    <span class="c">/* Replace with your application code */</span></div>
<div class="ln" style="top:335px">    <span class="k">while</span> (1) {</div>
<div class="ln" style="top:351px">        <span class="m">__NOP</span>();</div>
<div class="ln" style="top:367px">    }</div>
<div class="ln" style="top:383px">}</div>
</div>

<!-- code scrollbars -->
<div class="abs" style="left:810px;top:96px;width:18px;height:425px;background:#e8e8ec"></div>
<div class="abs" style="left:810px;top:96px;width:18px;height:16px;background:#f3f5fa;border:1px solid #c5cce0"></div>
<div class="abs" style="left:810px;top:131px;width:17px;height:4px;background:#fbfbef"></div>
<div class="abs" style="left:810px;top:132px;width:17px;height:2px;background:#0000c8"></div>
<div class="abs" style="left:814px;top:144px;width:9px;height:182px;background:#cdced6"></div>
<div class="abs" style="left:822px;top:158px;width:5px;height:6px;background:#ff0000"></div>
<div class="abs" style="left:822px;top:199px;width:5px;height:6px;background:#ff0000"></div>
<svg style="left:810px;top:96px" width="18" height="425" viewBox="810 96 18 425">
<path d="M813.5 104H823.5M818.5 98.5V102M818.5 106V109.5M816.5 100.5L818.5 98.5L820.5 100.5M816.5 107.5L818.5 109.5L820.5 107.5" stroke="#1e1e1e" stroke-width="1.3" fill="none"/>
<path d="M814 124L818.5 119.5L823 124Z" fill="#868999"/>
<path d="M814 510L818.5 515L823 510Z" fill="#868999"/>
</svg>
<div class="abs" style="left:0;top:521px;width:828px;height:17px;background:#e8e8ec"></div>
<div class="abs" style="left:0;top:521px;width:59px;height:17px;background:#fff;border:1px solid #aab3cf;border-left:none"></div>
<div class="t" id="tZoom" style="left:2.5px;top:522px;letter-spacing:-0.51px">100 %</div>
<div class="abs" style="left:76px;top:525px;width:684px;height:9px;background:#cdced6"></div>
<div class="abs" style="left:0;top:538px;width:828px;height:1px;background:#6f7fa6"></div>
<div class="abs" style="left:827px;top:96px;width:1px;height:443px;background:#6f7fa6"></div>
<svg style="left:0;top:521px" width="828" height="17" viewBox="0 521 828 17">
<path d="M50 528.5H56L53 531.8Z" fill="#1b1b1c"/>
<path d="M70 525L65 529.5L70 534Z" fill="#868999"/>
<path d="M799 525L804 529.5L799 534Z" fill="#868999"/>
</svg>
<!-- ================= SOLUTION EXPLORER ================= -->
<div id="se" class="abs" style="left:834px;top:51px;width:518px;height:488px;background:#8e9bbc"></div>
<div class="abs" style="left:835px;top:52px;width:516px;height:21px;background:#fff29d"></div>
<div class="t" id="tSE" style="left:838.2px;top:55px;letter-spacing:-0.08px">Solution Explorer</div>
<div class="abs" style="left:835px;top:73px;width:516px;height:28px;background:#cfd6e5"></div>
<div class="abs" style="left:835px;top:124px;width:516px;height:414px;background:#fff"></div>
<svg style="left:835px;top:52px" width="516" height="49" viewBox="835 52 516 49">
<!-- title icons -->
<path d="M1303 60H1311L1307 64Z" fill="#5e4b1e"/>
<path d="M1321 57h5v1h-5zM1321 57h1v6h-1zM1324 57h2v6h-2zM1320 63h7v1h-7zM1323 64h1v4h-1z" fill="#5e4b1e"/>
<path d="M1335.5 58L1344.5 66M1344.5 58L1335.5 66" stroke="#5e4b1e" stroke-width="1.4"/>
<!-- toolbar -->
<circle cx="850" cy="86.8" r="6" fill="#a9adbb"/><path d="M853.5 86.8H847M849.4 84L846.6 86.8L849.4 89.6" stroke="#d3d8e6" stroke-width="1.6" fill="none"/>
<circle cx="872" cy="86.8" r="6" fill="#a9adbb"/><path d="M868.5 86.8H875M872.6 84L875.4 86.8L872.6 89.6" stroke="#d3d8e6" stroke-width="1.6" fill="none"/>
<path d="M887.5 87.5L894 80.8L900.5 87.5M889.5 86.5V93.5H898.5V86.5M897.5 81V84" stroke="#2a2a2a" stroke-width="1.3" fill="#e6e9f2"/>
<rect x="892" y="88.5" width="3.5" height="5" fill="#2a2a2a"/>
<path d="M908.5 77V97" stroke="#7b86a3"/>
<path d="M919 80H924.5L921.7 82.8Z M921.7 82V85" fill="#2a2a2a" stroke="#2a2a2a" stroke-width="0.8"/>
<circle cx="927" cy="88.5" r="4.6" fill="#e6e9f2" stroke="#2a2a2a" stroke-width="1.1"/><path d="M927 85.5V88.8H929.8" stroke="#2a2a2a" stroke-width="1" fill="none"/>
<path d="M939 86.3H945L942 89.5Z" fill="#1b1b1c"/>
<path d="M957.5 83.5V81.5H964.5V88.5H962.5" fill="none" stroke="#2a2a2a"/><path d="M955.8 85.5V83.3H962.8V90.3" fill="none" stroke="#2a2a2a" stroke-width="0.9"/>
<rect x="954.5" y="85.5" width="6.5" height="6" fill="#e6e9f2" stroke="#2a2a2a" stroke-width="1.1"/><path d="M956.3 88.5H959.3" stroke="#1f5fa8" stroke-width="1.4"/>
<path d="M974.5 88V80.8H981" fill="none" stroke="#2a2a2a" stroke-width="1.1"/>
<path d="M977.5 83.5H984.5L987.5 86V93.5H977.5Z" fill="#e6e9f2" stroke="#2a2a2a" stroke-width="1.2"/>
<path d="M979.5 87H984M979.5 89H985.5M979.5 91H985.5" stroke="#2a2a2a" stroke-width="0.9"/>
<path d="M995.5 77V97" stroke="#7b86a3"/>
<path d="M1005 93L1011.5 86.5" stroke="#2a2a2a" stroke-width="2.6" stroke-linecap="round"/>
<path d="M1010.5 82Q1013.5 79.5 1016.2 81.5L1013.5 84.2L1014.7 85.5L1017.3 83Q1018 86.2 1015.3 87.5Q1012.5 88.5 1010.8 86.8Q1009 84.5 1010.5 82Z" fill="#2a2a2a"/>
<rect x="1022.5" y="75.5" width="21" height="23" fill="#fdf4bf" stroke="#e5c365"/>
<path d="M1026 88H1040" stroke="#1e1e1e" stroke-width="1"/><rect x="1033" y="85" width="7" height="3.5" fill="#1e1e1e"/>
<path d="M1047.5 77V97" stroke="#7b86a3"/>
<rect x="1055" y="79" width="16" height="15" fill="#dce3f0"/>
<path d="M1057.5 82.5A6.8 6.8 0 0 1 1068.5 82M1068.8 90.5A6.8 6.8 0 0 1 1057.5 90.5" fill="none" stroke="#1e86d8" stroke-width="1.5"/>
<path d="M1063 80V93.5" stroke="#8cc63f" stroke-width="1"/>
<rect x="1077" y="79" width="16" height="16" fill="#000"/>
</svg>
<div class="t" style="left:1056.5px;top:78.5px;font-size:8.5px;font-weight:bold;color:#1e6ac8">A</div>
<div class="t" style="left:1064.3px;top:79px;font-size:8px;color:#333">S</div>
<div class="t" style="left:1078px;top:78px;font-size:19px;font-weight:bold;color:#f2f2f2;line-height:19px">D</div>
<!-- SE search -->
<div class="abs" style="left:835px;top:101px;width:516px;height:20px;background:#fff;border-left:1px solid #c4cce0"></div>
<div class="abs" style="left:835px;top:121px;width:516px;height:3px;background:#cfd6e5"></div>
<div class="t" style="left:839.4px;top:104px;color:#6d6d6d;letter-spacing:-0.12px">Search Solution Explorer (Ctrl+;)</div>
<svg style="left:1323px;top:105px" width="14" height="14" viewBox="0 0 14 14"><circle cx="8.5" cy="5" r="3.3" fill="none" stroke="#555" stroke-width="1.6"/><path d="M6 7.5L1.5 12" stroke="#555" stroke-width="2.2"/></svg>
<div class="arr" style="left:1341px;top:110px;border-left-width:3px;border-right-width:3px;border-top-width:3px;border-top-color:#555"></div>
<!-- SE scrollbar -->
<div class="abs" style="left:1334px;top:124px;width:17px;height:414px;background:#e8e8ec"></div>
<div class="abs" style="left:1338px;top:143px;width:9px;height:203px;background:#cdced6"></div>
<svg style="left:1338px;top:132px" width="9" height="5"><path d="M0 5L4.5 0L9 5Z" fill="#868999"/></svg>
<svg style="left:1338px;top:527px" width="9" height="5"><path d="M0 0L4.5 5L9 0Z" fill="#868999"/></svg>
<!-- tree -->
<div id="tree" class="abs" style="left:835px;top:124px;width:499px;height:414px;overflow:hidden">
<svg style="left:0;top:0" width="499" height="414"><path d="M11.1 22.8L76.8 22.8L106.3 22.1L128.5 20.6L143.2 17.6L158 16.2L172.7 16.9L185.3 19.1L185.3 33.1L165.4 34.6L143.2 36.8L128.5 39.8L106.3 40.5L76.8 39.8L47.3 39L11.1 39Z" fill="#ffff00"/><path d="M7.8 345.4L51 345.4L89.4 344.4L137.4 341.6L175.7 340.6L204.5 339.1L223.7 340.2L243 344.4L253.5 348.3L253.5 362.7L233.3 361.7L195 359.8L137.4 359.4L79.8 360.2L7.8 360.2Z" fill="#ffff00"/></svg>
<svg style="left:12px;top:5px" width="16" height="14" viewBox="0 0 16 14"><rect x="0.5" y="0.5" width="15" height="12.5" fill="#fff" stroke="#6d7f9e"/><rect x="1" y="1" width="14" height="2.2" fill="#3f74c8"/><path d="M4.5 13.5L3 14.5M8 13.5V15M12 13.5L13.5 14.5" stroke="#333" stroke-width="0.8"/><ellipse cx="9.5" cy="8.3" rx="5.2" ry="4.3" fill="#d8281a"/><path d="M3.5 12Q3 8 6.5 6.5Q5 9.5 6 12.5Z" fill="#2a2a2a"/><path d="M9.5 4.2Q10.5 8 9 12.5" stroke="#7a1008" stroke-width="0.7" fill="none"/><circle cx="8" cy="7" r="0.9" fill="#3a0a05"/><circle cx="12" cy="7.5" r="0.9" fill="#3a0a05"/><circle cx="10.8" cy="10.5" r="0.9" fill="#3a0a05"/><circle cx="7.5" cy="10.3" r="0.8" fill="#3a0a05"/><ellipse cx="11" cy="6" rx="1.8" ry="0.9" fill="#ff8a7a" opacity="0.7"/></svg>
<div class="row" style="left:32.9px;top:2px;letter-spacing:0.03px">Solution 'QTouch-SAML11-Trustzone-Project' (2 projects)</div>
<svg style="left:11px;top:27px" width="7" height="7"><use href="#iCol"/></svg>
<svg style="left:33px;top:23px" width="12" height="14"><use href="#iProj"/></svg>
<div class="row" style="left:51.1px;top:20px;font-weight:bold;letter-spacing:-0.2px">L11_Non-Secure_QT7</div>
<svg style="left:48px;top:42px" width="16" height="12"><use href="#iDep"/></svg>
<div class="row" style="left:68.9px;top:38px;letter-spacing:-0.18px">Dependencies</div>
<svg style="left:48px;top:60px" width="16" height="12"><use href="#iDep"/></svg>
<div class="row" style="left:68.9px;top:56px;letter-spacing:-0.03px">Output Files</div>
<svg style="left:29px;top:79px" width="6" height="9"><use href="#iExp"/></svg>
<svg style="left:48px;top:78px" width="16" height="12"><use href="#iLib"/></svg>
<div class="row" style="left:68.9px;top:74px;letter-spacing:-0.16px">Libraries</div>
<svg style="left:29px;top:97px" width="6" height="9"><use href="#iExp"/></svg>
<svg style="left:48px;top:96px" width="16" height="12"><use href="#iFolder"/></svg>
<div class="row" style="left:68.9px;top:92px;letter-spacing:0.25px">Config</div>
<svg style="left:29px;top:115px" width="6" height="9"><use href="#iExp"/></svg>
<svg style="left:48px;top:114px" width="16" height="12"><use href="#iFolder"/></svg>
<div class="row" style="left:68.9px;top:110px;letter-spacing:-0.28px">Device_Startup</div>
<svg style="left:29px;top:133px" width="6" height="9"><use href="#iExp"/></svg>
<svg style="left:48px;top:132px" width="16" height="12"><use href="#iFolder"/></svg>
<div class="row" style="left:68.9px;top:128px;letter-spacing:-0.22px">examples</div>
<svg style="left:29px;top:151px" width="6" height="9"><use href="#iExp"/></svg>
<svg style="left:48px;top:150px" width="16" height="12"><use href="#iFolder"/></svg>
<div class="row" style="left:68.9px;top:146px;letter-spacing:0.26px">hal</div>
<svg style="left:29px;top:169px" width="6" height="9"><use href="#iExp"/></svg>
<svg style="left:48px;top:168px" width="16" height="12"><use href="#iFolder"/></svg>
<div class="row" style="left:68.9px;top:164px;letter-spacing:0.59px">hpl</div>
<svg style="left:29px;top:187px" width="6" height="9"><use href="#iExp"/></svg>
<svg style="left:48px;top:186px" width="16" height="12"><use href="#iFolder"/></svg>
<div class="row" style="left:68.9px;top:182px;letter-spacing:0.42px">hri</div>
<svg style="left:29px;top:205px" width="6" height="9"><use href="#iExp"/></svg>
<svg style="left:48px;top:204px" width="16" height="12"><use href="#iFolder"/></svg>
<div class="row" style="left:68.9px;top:200px;letter-spacing:0.39px">qtouch</div>
<svg style="left:50px;top:220px" width="12" height="15"><use href="#iFileC"/></svg>
<div class="abs" style="left:51.5px;top:220px;width:9px;height:14px;line-height:14px;font-size:12.5px;font-weight:bold;color:#2f66c4;text-align:center">c</div>
<div class="row" style="left:68.9px;top:218px;letter-spacing:-0.1px">atmel_start.c</div>
<svg style="left:50px;top:238px" width="12" height="15"><use href="#iFileC"/></svg>
<div class="abs" style="left:51.5px;top:239px;width:9px;height:14px;line-height:14px;font-size:11px;font-weight:bold;color:#2f66c4;text-align:center">h</div>
<div class="row" style="left:68.9px;top:236px;letter-spacing:-0.06px">atmel_start.h</div>
<svg style="left:50px;top:256px" width="12" height="15"><use href="#iFileC"/></svg>
<div class="abs" style="left:51.5px;top:257px;width:9px;height:14px;line-height:14px;font-size:11px;font-weight:bold;color:#2f66c4;text-align:center">h</div>
<div class="row" style="left:68.9px;top:254px;letter-spacing:-0.15px">atmel_start_pins.h</div>
<svg style="left:50px;top:274px" width="12" height="15"><use href="#iFileC"/></svg>
<div class="abs" style="left:51.5px;top:274px;width:9px;height:14px;line-height:14px;font-size:12.5px;font-weight:bold;color:#2f66c4;text-align:center">c</div>
<div class="row" style="left:68.9px;top:272px;letter-spacing:0.03px">driver_init.c</div>
<svg style="left:50px;top:292px" width="12" height="15"><use href="#iFileC"/></svg>
<div class="abs" style="left:51.5px;top:293px;width:9px;height:14px;line-height:14px;font-size:11px;font-weight:bold;color:#2f66c4;text-align:center">h</div>
<div class="row" style="left:68.9px;top:290px;letter-spacing:0.04px">driver_init.h</div>
<svg style="left:48px;top:309px" width="17" height="18" viewBox="0 0 17 18"><path d="M9 1.5H13.5L15.5 3.5V8H9Z" fill="#f1f1f1" stroke="#bdbdbd"/><path d="M2.5 1.6H8L11 4.3L8 7.1H2.5Z" fill="#f0d446" stroke="#e88a1a" stroke-width="1.3" stroke-linejoin="round"/><path d="M0 2.6H2.5M0 6.2H2.5M11 4.3H13" stroke="#e88a1a" stroke-width="1.2"/><rect x="1.5" y="9" width="6" height="8" fill="#111"/><path d="M0.3 10.5H1.5M0.3 12.5H1.5M0.3 14.5H1.5M3 8.2V9M5 8.2V9M3 17V17.8M5 17V17.8" stroke="#111" stroke-width="1.1"/><rect x="2.8" y="10.3" width="3.6" height="5" fill="#8a8a8a"/><rect x="8.7" y="9.7" width="6" height="6" fill="#fff" stroke="#1e9be0" stroke-width="1.4"/><path d="M10.3 14.2L13 11.5M11 11.2H13.3V13.5" stroke="#1e88d8" stroke-width="1.2" fill="none"/></svg>
<div class="row" style="left:68.9px;top:308px;letter-spacing:-0.17px">libsecure_gateway_veneer.lib</div>
<svg style="left:50px;top:328px" width="12" height="15"><use href="#iFileC"/></svg>
<div class="abs" style="left:51.5px;top:328px;width:9px;height:14px;line-height:14px;font-size:12.5px;font-weight:bold;color:#2f66c4;text-align:center">c</div>
<div class="row" style="left:68.9px;top:326px;letter-spacing:0.17px">main.c</div>
<svg style="left:11px;top:351px" width="7" height="7"><use href="#iCol"/></svg>
<svg style="left:33px;top:347px" width="12" height="14"><use href="#iProj"/></svg>
<div class="row" style="left:51px;top:344px;letter-spacing:0.06px">QTouch-SAML11-Trustzone-Project</div>
<svg style="left:29px;top:367px" width="6" height="9"><use href="#iExp"/></svg>
<svg style="left:48px;top:366px" width="16" height="12"><use href="#iDep"/></svg>
<div class="row" style="left:68.9px;top:362px;letter-spacing:-0.18px">Dependencies</div>
<svg style="left:29px;top:385px" width="6" height="9"><use href="#iExp"/></svg>
<svg style="left:48px;top:384px" width="16" height="12"><use href="#iDep"/></svg>
<div class="row" style="left:68.9px;top:380px;letter-spacing:-0.03px">Output Files</div>
<svg style="left:29px;top:403px" width="6" height="9"><use href="#iExp"/></svg>
<svg style="left:48px;top:402px" width="16" height="12"><use href="#iLib"/></svg>
<div class="row" style="left:68.9px;top:398px;letter-spacing:-0.16px">Libraries</div>
</div>

<!-- ================= ERROR LIST ================= -->
<div class="abs" style="left:0;top:545px;width:669px;height:73px;background:#8e9bbc"></div>
<div class="abs" style="left:0;top:546px;width:668px;height:21px;background:#4d6082"></div>
<div class="t" id="tEL" style="left:3.3px;top:549px;color:#fff;letter-spacing:-0.25px">Error List</div>
<div class="abs" style="left:0;top:567px;width:668px;height:27px;background:#cfd6e5"></div>
<div class="abs" style="left:0;top:594px;width:668px;height:19px;background:#fff"></div>
<div class="abs" style="left:0;top:613px;width:668px;height:3px;background:linear-gradient(#cfd6e5,#b9c2d8)"></div>
<div class="abs" style="left:0;top:616px;width:668px;height:2px;background:#f4f6fa"></div>
<div class="abs" style="left:6px;top:570px;width:150px;height:20px;background:#fff;border:1px solid #e3e8f3"></div>
<div class="abs" style="left:445px;top:570px;width:150px;height:20px;background:#fff;border:1px solid #e3e8f3"></div>
<div class="abs" style="left:167px;top:569px;width:70px;height:22px;background:#fdf4bf;border:1px solid #e5c365"></div>
<div class="abs" style="left:245px;top:569px;width:90px;height:22px;background:#fdf4bf;border:1px solid #e5c365"></div>
<div class="abs" style="left:343px;top:569px;width:91px;height:22px;background:#fdf4bf;border:1px solid #e5c365"></div>
<svg style="left:0;top:546px" width="668" height="72" viewBox="0 546 668 72">
<path d="M620 554H628L624 558Z" fill="#cfd6e5"/>
<path d="M638 551h5v1h-5zM638 551h1v6h-1zM641 551h2v6h-2zM637 557h7v1h-7zM640 558h1v4h-1z" fill="#dfe3ee"/>
<path d="M652.5 552L661.5 560M661.5 552L652.5 560" stroke="#cfd6e5" stroke-width="1.4"/>
<path d="M146.5 579H152.5L149.5 582.2Z" fill="#1b1b1c"/>
<path d="M585 579H591L588 582.2Z" fill="#1b1b1c"/>
<path d="M162.5 571.5V589.5M240.5 571.5V589.5M338.5 571.5V589.5M437.5 571.5V589.5" stroke="#7b86a3"/>
<circle cx="178.2" cy="580.2" r="7.2" fill="#e0241a" stroke="#a8140e" stroke-width="0.8"/>
<path d="M174.8 576.8L181.6 583.6M181.6 576.8L174.8 583.6" stroke="#fff" stroke-width="2.3"/>
<path d="M256 574.2L263.2 587H248.8Z" fill="#ffcf1c" stroke="#d8a000" stroke-width="1" stroke-linejoin="round"/>
<path d="M256 578V583" stroke="#1e1e1e" stroke-width="1.7"/><rect x="255.2" y="584.2" width="1.7" height="1.7" fill="#1e1e1e"/>
<circle cx="353" cy="580.2" r="7.2" fill="#1e8ede" stroke="#1670b8" stroke-width="0.8"/>
<rect x="352" y="579" width="2.2" height="5.5" fill="#fff"/><rect x="352" y="575.5" width="2.2" height="2.2" fill="#fff"/>
<circle cx="648.8" cy="601.5" r="3.4" fill="none" stroke="#555" stroke-width="1.6"/><path d="M646.3 604L641.5 609" stroke="#555" stroke-width="2.2"/>
<path d="M658.5 602H664.5L661.5 605Z" fill="#555"/>
<path d="M26.5 616V618M52.5 616V618M157.5 616V618M350.5 616V618M577.5 616V618M646.5 616V618" stroke="#c5cbdb"/>
</svg>
<div class="t" id="tES" style="left:9.5px;top:573px;letter-spacing:-0.03px">Entire Solution</div>
<div class="t" id="tErr" style="left:189px;top:573px;letter-spacing:-0.28px">0 Errors</div>
<div class="t" id="tWarn" style="left:267.5px;top:573px;letter-spacing:-0.03px">0 Warnings</div>
<div class="t" id="tMsg" style="left:365.3px;top:573px;letter-spacing:-0.35px">0 Messages</div>
<div class="t" id="tBI" style="left:448.7px;top:573px;letter-spacing:-0.09px">Build + IntelliSense</div>
<div class="t" id="tSEL" style="left:3.3px;top:596px;color:#6d6d6d;letter-spacing:-0.3px">Search Error List</div>
<!-- bottom tabs -->
<div class="abs" style="left:0;top:618px;width:55px;height:14px;background:#fff"></div>
<div class="abs" style="left:55px;top:618px;width:197px;height:14px;background:#4d6082"></div>
<div class="t" id="tT1" style="left:3.9px;top:620px;letter-spacing:-0.27px">Error List</div>
<div class="t" id="tT2" style="left:61.3px;top:620px;color:#fff;letter-spacing:0.2px">Command Window</div>
<div class="t" id="tT3" style="left:174.8px;top:620px;color:#fff;letter-spacing:-0.46px">Find Results 1</div>

<!-- ================= OUTPUT ================= -->
<div class="abs" style="left:676px;top:545px;width:676px;height:87px;background:#8e9bbc"></div>
<div class="abs" style="left:677px;top:546px;width:674px;height:21px;background:#4d6082"></div>
<div class="t" id="tOut" style="left:680px;top:549px;color:#fff;letter-spacing:0.36px">Output</div>
<div class="abs" style="left:677px;top:567px;width:674px;height:26px;background:#cfd6e5"></div>
<div class="abs" style="left:677px;top:593px;width:674px;height:39px;background:#e6e7e8"></div>
<div class="abs" style="left:789px;top:570px;width:299px;height:20px;background:#fff;border:1px solid #e3e8f3"></div>
<div class="abs" style="left:1212px;top:569px;width:22px;height:22px;background:#fdf4bf;border:1px solid #e5c365"></div>
<svg style="left:677px;top:546px" width="674" height="86" viewBox="677 546 674 86">
<path d="M1303 554H1311L1307 558Z" fill="#cfd6e5"/>
<path d="M1321 551h5v1h-5zM1321 551h1v6h-1zM1324 551h2v6h-2zM1320 557h7v1h-7zM1323 558h1v4h-1z" fill="#dfe3ee"/>
<path d="M1336 552L1345 560M1345 552L1336 560" stroke="#cfd6e5" stroke-width="1.4"/>
<path d="M1078 579H1084L1081 582.2Z" fill="#1b1b1c"/>
<path d="M1095.5 571.5V589.5M1125.5 571.5V589.5M1177.5 571.5V589.5M1207.5 571.5V589.5" stroke="#7b86a3"/>
<!-- gray icon -->
<path d="M1110 580H1117M1107 586.5H1117" stroke="#adb1bf" stroke-width="1.2"/><rect x="1107" y="582" width="6" height="3" fill="#adb1bf"/>
<path d="M1111.5 579V576Q1111.5 574 1108.5 574.3M1108.8 572.5L1106 574.5L1109 576.3" stroke="#adb1bf" stroke-width="1.3" fill="none"/>
<!-- prev -->
<path d="M1141 579.8H1147M1137 582.3H1147M1137 584.8H1147" stroke="#1e1e1e" stroke-width="1.3"/>
<path d="M1142.5 577H1135.5M1138.5 574.2L1135.5 577L1138.5 579.8" stroke="#00539c" stroke-width="1.9" fill="none"/>
<!-- next -->
<path d="M1164 579.8H1169M1159 582.3H1169M1159 584.8H1169" stroke="#1e1e1e" stroke-width="1.3"/>
<path d="M1157 577H1164M1161 574.2L1164 577L1161 579.8" stroke="#00539c" stroke-width="1.9" fill="none"/>
<!-- clear -->
<path d="M1194.5 574H1200M1195.5 577.8H1200M1188.5 582H1200M1188.5 586H1200" stroke="#1e1e1e" stroke-width="1.5"/>
<path d="M1187.2 572.8L1194.8 580.6M1194.8 572.8L1187.2 580.6" stroke="#c0281a" stroke-width="1.3"/>
<!-- wrap -->
<path d="M1225.5 576.3H1229.8V584H1222.5M1225.6 581L1222.3 584L1225.6 587" stroke="#1e1e1e" stroke-width="1.7" fill="none"/>
<!-- scroll arrows -->
<path d="M1337.5 604L1342.5 599L1347.5 604Z" fill="#9a9cad"/>
<path d="M1337.5 612.5L1342.5 617.5L1347.5 612.5Z" fill="#9a9cad"/>
<path d="M687 625L682.5 629.5L687 634Z" fill="#c6c8d1"/>
<path d="M1323.5 625L1328 629.5L1323.5 634Z" fill="#c6c8d1"/>
</svg>
<div class="t" style="left:1216px;top:573.5px;font-size:6.5px;line-height:7px;font-weight:bold;color:#1e1e1e">ab</div>
<div class="t" style="left:1216px;top:579.5px;font-size:6.5px;line-height:7px;font-weight:bold;color:#1e1e1e">c</div>
<div class="t" id="tSOF" style="left:682.5px;top:573px;color:#1e1e1e;letter-spacing:0.18px">Show output from:</div>
<div class="t" id="tBuild" style="left:793px;top:573px;letter-spacing:0.66px">Build</div>
<div class="ln" id="tOutLn" style="left:688px;top:590px">========== Build: 1 succeeded or up-to-date, 0 failed, 0 skipped ==========</div>

</body>
</html>
